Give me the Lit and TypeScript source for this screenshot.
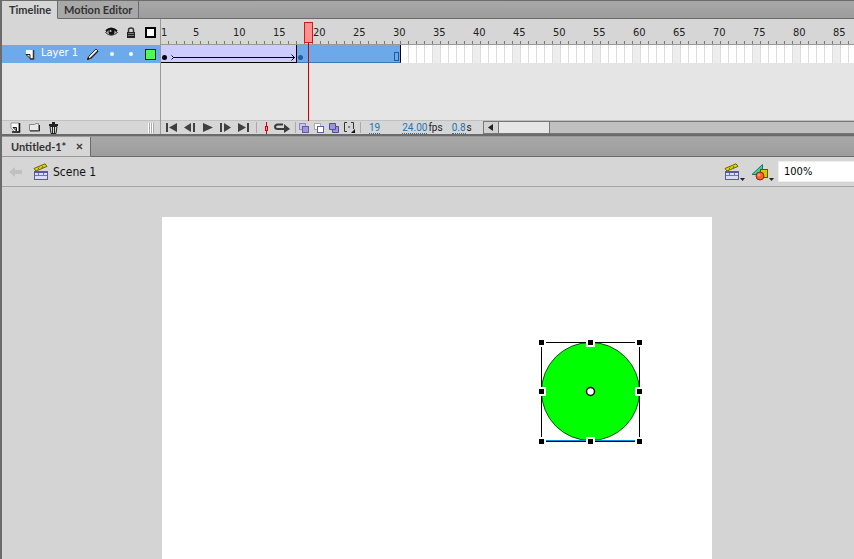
import { LitElement, html, css, svg } from "lit";
import { customElement, state } from "lit/decorators.js";

const FRAME_LABELS = [1, ...Array.from({ length: 17 }, (_, i) => (i + 1) * 5)];

const clapper = html`<svg width="16" height="18" viewBox="0 0 16 18">
  <path d="M1 5.5 L12 0.8 L14 3.4 L3 8 Z" fill="#e6d800" stroke="#6c6400" />
  <path d="M5 6.5 L6 4.5 M9 5 L10 3" stroke="#6c6400" />
  <rect x="1.5" y="8.5" width="13" height="8" fill="#dcdcf8" stroke="#5858a8" />
  <rect x="1" y="8" width="14" height="2" fill="#5858a8" />
  <path d="M2 12.5 H14 M5.5 10 V12 M10.5 10 V12" stroke="#7070c0" />
</svg>`;

const icons = {
  eye: html`<svg width="13" height="10" viewBox="0 0 13 10">
    <path d="M0.5 5.5 Q6 -1 12.5 5.5 Q6 11 0.5 5.5Z" fill="#bbb" stroke="#333" />
    <path d="M1 4 Q6 -1 12 4" fill="none" stroke="#111" stroke-width="2" />
    <circle cx="6.5" cy="5" r="3" fill="#111" /><circle cx="5.5" cy="4" r="1" fill="#ccc" />
  </svg>`,
  lock: html`<svg width="10" height="11" viewBox="0 0 10 11">
    <path d="M2.5 5 V3 Q2.5 1 5 1 Q7.5 1 7.5 3 V5" fill="none" stroke="#333" stroke-width="1.5" />
    <rect x="1" y="5" width="8" height="6" fill="#222" />
    <path d="M2 6.5 H8 M2 8.5 H8" stroke="#777" />
  </svg>`,
  layer: html`<svg width="10" height="11" viewBox="0 0 10 11">
    <path d="M1 1 H8 V9 H5 L1 5Z" fill="#fff" />
    <path d="M1 5.5 H5 V9.5Z" fill="#ddd" stroke="#222" />
    <path d="M8.5 1 V10 H5" fill="none" stroke="#333" stroke-width="1.5" />
  </svg>`,
  pencil: html`<svg width="13" height="13" viewBox="0 0 13 13">
    <path d="M1.5 11.5 L3 8 L10 1 L12 3 L5 10Z" fill="#eee" stroke="#333" />
    <path d="M4.5 10.5 L12 3" stroke="#222" stroke-width="1.5" /><path d="M1 12 L2 9 L4 11Z" fill="#111" />
  </svg>`,
  newLayer: html`<svg width="11" height="11" viewBox="0 0 11 11">
    <path d="M1 1 H9 V10 H5 L1 6Z" fill="#fff" stroke="#999" />
    <path d="M9.5 1 V10 H2" fill="none" stroke="#111" stroke-width="1.5" />
    <path d="M3 5.5 H6.5 V9Z" fill="#aaa" stroke="#222" />
  </svg>`,
  folder: html`<svg width="11" height="9" viewBox="0 0 11 9">
    <path d="M0.5 7.5 V1.5 H5.5 L7 0.5 H9.5 V7.5Z" fill="#e8e8e8" stroke="#888" />
    <path d="M1 8 H10.5 V2" fill="none" stroke="#222" />
  </svg>`,
  trash: html`<svg width="11" height="12" viewBox="0 0 11 12">
    <path d="M1 3 H10 M4 1 H7" stroke="#222" stroke-width="2" />
    <path d="M2 4.5 H9 L8 11.5 H3Z" fill="#ddd" stroke="#222" />
    <path d="M4.5 5 V11 M6.5 5 V11" stroke="#222" />
  </svg>`,
  marker: html`<svg width="5" height="12" viewBox="0 0 5 12">
    <path d="M2.5 0 V12" stroke="#e00000" /><rect x="1.5" y="4.5" width="2" height="4" fill="#f99" stroke="#e00000" />
  </svg>`,
  loop: html`<svg width="16" height="10" viewBox="0 0 16 10">
    <path d="M9 1.5 H4 Q1 1.5 1 4 Q1 6 4 6 H11" fill="none" stroke="#3c3c3c" stroke-width="2" />
    <path d="M10 1 L16 6 L10 10Z" fill="#3c3c3c" />
  </svg>`,
  onion: html`<svg width="10" height="10" viewBox="0 0 10 10">
    <rect x="0.5" y="0.5" width="6" height="6" fill="#c8c2ec" stroke="#8c86bc" />
    <rect x="3.5" y="3.5" width="6" height="6" fill="#9c94dc" stroke="#645ca0" />
  </svg>`,
  outlines: html`<svg width="10" height="10" viewBox="0 0 10 10">
    <rect x="0.5" y="0.5" width="6" height="6" fill="#fff" stroke="#aaa" />
    <rect x="3.5" y="3.5" width="6" height="6" fill="#fff" stroke="#645ca0" />
  </svg>`,
  multi: html`<svg width="10" height="10" viewBox="0 0 10 10">
    <path d="M0.5 0.5 H6.5 V3.5 H9.5 V9.5 H3.5 V6.5 H0.5Z" fill="#9c94dc" stroke="#544c90" />
    <path d="M3.5 6.5 H6.5 V3.5" fill="none" stroke="#544c90" />
  </svg>`,
  range: html`<svg width="11" height="11" viewBox="0 0 11 11">
    <path d="M3 0.5 H0.5 V9.5 H3 M7 0.5 H9.5 V7 M4 5 H6" fill="none" stroke="#333" />
    <path d="M11 7 V11 H7Z" fill="#111" />
  </svg>`,
  back: html`<svg width="13" height="10" viewBox="0 0 13 10"><path d="M0 5 L6 0 V3 H13 V7 H6 V10Z" fill="#c0c0c0" /></svg>`,
  symbols: html`<svg width="18" height="17" viewBox="0 0 18 17">
    <path d="M1 10.5 L11.5 0.5 V10.5Z" fill="#3fd0a0" stroke="#187860" />
    <rect x="9.5" y="5.5" width="7" height="8" fill="#d8c800" stroke="#605800" />
    <circle cx="9" cy="12" r="4" fill="#f46030" stroke="#902808" />
    <circle cx="8" cy="11" r="1.5" fill="#ff9c70" />
  </svg>`,
};

const transport: Array<[string, unknown]> = [
  ["First frame", svg`<path d="M0 0H2V9H0Z M11 0V9L3 4.5Z" />`],
  ["Step back", svg`<path d="M7 0V9L0 4.5Z M9 0H11V9H9Z" />`],
  ["Play", svg`<path d="M1 0L11 4.5L1 9Z" />`],
  ["Step forward", svg`<path d="M0 0H2V9H0Z M4 0V9L11 4.5Z" />`],
  ["Last frame", svg`<path d="M0 0V9L8 4.5Z M9 0H11V9H9Z" />`],
];

@customElement("timeline-ruler")
export class TimelineRuler extends LitElement {
  static styles = css`
    :host {
      display: grid;
      grid-template-columns: repeat(200, 8px);
      height: 26px;
      box-sizing: border-box;
      border-bottom: 1px solid #999;
      overflow: hidden;
      font: 11px/27px "DejaVu Sans Condensed", "Noto Sans", sans-serif;
      color: #222;
      background: repeating-linear-gradient(90deg, transparent 0 7px, #777 7px 8px) 0 100% / 100% 3px no-repeat;
    }
    .number { grid-row: 1; width: 0; white-space: nowrap; }
  `;
  render() {
    return FRAME_LABELS.map((n) => html`<span class="number" style="grid-column:${n}">${n}</span>`);
  }
}

@customElement("frame-track")
export class FrameTrack extends LitElement {
  static styles = css`
    :host {
      display: flex;
      height: 18px;
      background:
        repeating-linear-gradient(90deg, transparent 0 7px, #ddd 7px 8px),
        repeating-linear-gradient(90deg, #fff 0 32px, #ededed 32px 40px);
    }
    .span {
      display: flex;
      align-items: flex-end;
      box-sizing: border-box;
      border-right: 1px solid #000;
      border-bottom: 1px solid #000;
    }
    .tween { width: 136px; background: #ccccff; }
    .selected { width: 104px; background: #6ba9ea; border-bottom-color: #3c78b8; justify-content: space-between; }
    .key { width: 5px; height: 5px; border-radius: 50%; background: #000; margin: 0 0 2px 1px; }
    .selected .key { background: #1c5ca4; }
    .arrow { flex: 1; height: 1px; background: #000; margin: 0 0 4px -1px; }
    .tail { width: 3px; height: 5px; margin: 0 0 2px 4px; }
    .head { width: 4px; height: 7px; margin: 0 1px 1px -4px; }
    .end { width: 5px; height: 9px; box-sizing: border-box; border: 1px solid #1c5ca4; margin: 0 1px 1px; }
  `;
  render() {
    return html`
      <div class="span tween">
        <i class="key"></i>
        <svg class="tail" viewBox="0 0 3 5"><path d="M0.5 0.5 L2.5 2.5 L0.5 4.5" fill="none" stroke="#000" /></svg>
        <i class="arrow"></i>
        <svg class="head" viewBox="0 0 4 7"><path d="M0.5 0.5 L3.5 3.5 L0.5 6.5" fill="none" stroke="#000" /></svg>
      </div>
      <div class="span selected"><i class="key"></i><i class="end"></i></div>
    `;
  }
}

@customElement("app-root")
export class AppRoot extends LitElement {
  @state() private frame = 19;

  static styles = css`
    :host {
      display: flex;
      flex-direction: column;
      min-height: 100vh;
      box-sizing: border-box;
      overflow: hidden;
      border-left: 2px solid #6b6b6b;
      background: #d4d4d4;
      color: #222;
      font: 11px/14px "DejaVu Sans Condensed", "Noto Sans", sans-serif;
    }
    svg { display: block; flex: none; }
    button {
      display: flex;
      align-items: center;
      justify-content: center;
      margin: 0;
      padding: 0;
      border: 0;
      background: none;
      font: inherit;
      color: inherit;
    }
    .tabs {
      display: flex;
      box-sizing: border-box;
      background: linear-gradient(#a8a8a8, #9c9c9c);
      border-top: 1px solid #6b6b6b;
    }
    .tab {
      box-sizing: border-box;
      border-right: 1px solid #6b6b6b;
      border-bottom: 1px solid #6b6b6b;
      font: 700 11px/17px Lato, "Noto Sans", sans-serif;
      color: #333;
      background: #a8a8a8;
      height: 18px;
      padding: 0 6px;
      white-space: nowrap;
    }
    .tab.active { padding-left: 7px; background: #d6d6d6; border-bottom-color: #d6d6d6; }
    .filler { flex: 1; border-bottom: 1px solid #6b6b6b; }
    .timeline { display: grid; grid-template-columns: 158px 1px minmax(0, 1fr); background: #d6d6d6; }
    .layers { display: flex; flex-direction: column; }
    .columns { display: flex; align-items: center; height: 26px; box-sizing: border-box; }
    .layer {
      display: flex;
      align-items: center;
      height: 18px;
      box-sizing: border-box;
      background: #6caaec;
      color: #fff;
    }
    .toggles { display: grid; grid-template-columns: 19px 19px 20px; justify-items: center; align-items: center; margin-left: auto; }
    .box { width: 11px; height: 11px; box-sizing: border-box; border: 2px solid #000; background: #fff; }
    .box.green { border: 1px solid #222; background: #4cff4c; }
    .dot { width: 4px; height: 4px; border-radius: 50%; background: #fff; }
    .layer-icon { margin-left: 23px; }
    .layer-name { padding: 0 8px 2px 6px; white-space: nowrap; }
    .blank { height: 58px; background: #e5e5e5; border-bottom: 1px solid #c0c0c0; box-sizing: border-box; }
    .divider { background: #999; }
    .frames { position: relative; }
    .playhead { position: absolute; left: 143px; top: 3px; bottom: 13px; width: 9px; pointer-events: none; }
    .playhead::before {
      content: "";
      display: block;
      height: 21px;
      box-sizing: border-box;
      border: 1px solid #cc1c1c;
      background: #ff9090;
    }
    .playhead::after { content: ""; position: absolute; top: 21px; bottom: 0; left: 4px; width: 1px; background: #cc0000; }
    .bar { display: flex; align-items: center; height: 13px; }
    .layer-tools { padding-left: 8px; gap: 8px; }
    .grip { width: 6px; height: 10px; margin: 0 6px 0 auto; background: repeating-linear-gradient(90deg, #fff 0 1px, #aaa 1px 2px); }
    .transport { display: flex; gap: 7px; margin-left: 5px; fill: #404040; }
    .rule { width: 1px; height: 11px; background: #aaa; }
    .rule.first { margin: 0 7px; }
    .rule.second { margin: 0 3px 0 5px; }
    .rule.third { margin: 0 8px 0 5px; }
    .loop { margin-left: 5px; }
    .onion { display: flex; gap: 5px; }
    .value, .unit { font: 10px/11px Roboto, "Noto Sans", sans-serif; }
    .value { color: #2474b4; border-bottom: 1px dotted #2474b4; }
    .unit { margin-left: 1px; }
    .fps { margin-left: 22px; }
    .seconds { margin-left: 9px; }
    .scroll { display: flex; flex: 1; height: 13px; box-sizing: border-box; margin-left: 11px; border: 1px solid #777; border-right: 0; background: #c0c0c0; }
    .scroll-button { width: 15px; background: #d2d2d2; border-right: 1px solid #777; }
    .thumb { width: 50px; background: #e6e6e6; border-right: 1px solid #777; }
    .gap { height: 2px; background: #6b6b6b; border-bottom: 1px solid #999; }
    .document-tabs { border-top: 0; }
    .document-tabs .tab { display: flex; align-items: center; gap: 10px; height: 20px; padding: 0 7px 0 9px; }
    .document-tabs .tab.active { border-bottom-color: #999; }
    .close { width: 7px; height: 7px; }
    .edit { display: flex; align-items: center; height: 30px; box-sizing: border-box; border-bottom: 1px solid #a6a6a6; background: #d6d6d6; }
    .back { margin: 0 11px 0 7px; }
    .scene { display: flex; align-items: center; gap: 4px; font-size: 12px; color: #111; }
    .edit-tools { display: flex; gap: 6px; margin-left: auto; }
    .menu { align-items: flex-end; }
    .zoom { width: 76px; height: 21px; box-sizing: border-box; margin-left: 4px; padding: 0 5px; border: 1px solid #eee; border-right: 0; font: inherit; background: #fff; color: #000; outline: 0; }
    .pasteboard { flex: 1; display: flex; padding: 30px 0 0 160px; }
    .stage { position: relative; width: 550px; min-height: 340px; background: #fff; }
    .shape { position: absolute; left: 376px; top: 122px; }
  `;

  private handle(x: number, y: number) {
    return svg`<rect x=${x - 4} y=${y - 4} width="9" height="9" fill="#fff" /><rect x=${x - 2} y=${y - 2} width="5" height="5" fill="#000" />`;
  }

  render() {
    const points = [[3, 3], [52, 3], [101, 3], [3, 52], [101, 52], [3, 102], [52, 102], [101, 102]];
    const arrow = html`<svg width="5" height="3" viewBox="0 0 5 3"><path d="M0 0H5L2.5 3Z" fill="#222" /></svg>`;
    return html`
      <nav class="tabs">
        <button class="tab active">Timeline</button>
        <button class="tab">Motion Editor</button>
        <div class="filler"></div>
      </nav>
      <section class="timeline">
        <div class="layers">
          <div class="columns">
            <div class="toggles">${icons.eye}${icons.lock}<i class="box"></i></div>
          </div>
          <div class="layer">
            <span class="layer-icon">${icons.layer}</span>
            <span class="layer-name">Layer 1</span>
            ${icons.pencil}
            <div class="toggles"><i class="dot"></i><i class="dot"></i><i class="box green"></i></div>
          </div>
          <div class="blank"></div>
          <div class="bar layer-tools">
            <button aria-label="New layer">${icons.newLayer}</button>
            <button aria-label="New folder">${icons.folder}</button>
            <button aria-label="Delete">${icons.trash}</button>
            <i class="grip"></i>
          </div>
        </div>
        <div class="divider"></div>
        <div class="frames">
          <timeline-ruler></timeline-ruler>
          <frame-track></frame-track>
          <div class="blank"></div>
          <div class="bar">
            <div class="transport">
              ${transport.map(([name, shape]) => html`<button aria-label=${name}><svg width="11" height="9" viewBox="0 0 11 9">${shape}</svg></button>`)}
            </div>
            <i class="rule first"></i>
            <button aria-label="Center frame">${icons.marker}</button>
            <button class="loop" aria-label="Loop">${icons.loop}</button>
            <i class="rule second"></i>
            <div class="onion">
              <button aria-label="Onion skin">${icons.onion}</button>
              <button aria-label="Onion skin outlines">${icons.outlines}</button>
              <button aria-label="Edit multiple frames">${icons.multi}</button>
              <button aria-label="Modify markers">${icons.range}</button>
            </div>
            <i class="rule third"></i>
            <span class="value">${this.frame}</span>
            <span class="value fps">24.00</span><span class="unit">fps</span>
            <span class="value seconds">0.8</span><span class="unit">s</span>
            <div class="scroll">
              <button class="scroll-button" aria-label="Scroll left">
                <svg width="5" height="7" viewBox="0 0 5 7"><path d="M5 0V7L0 3.5Z" fill="#222" /></svg>
              </button>
              <div class="thumb"></div>
            </div>
          </div>
          <div class="playhead"></div>
        </div>
      </section>
      <div class="gap"></div>
      <nav class="tabs document-tabs">
        <button class="tab active">
          Untitled-1*
          <svg class="close" viewBox="0 0 7 7"><path d="M1 1L6 6M6 1L1 6" stroke="#444" stroke-width="1.5" /></svg>
        </button>
        <div class="filler"></div>
      </nav>
      <header class="edit">
        <button class="back" aria-label="Back">${icons.back}</button>
        <button class="scene">${clapper}<span>Scene 1</span></button>
        <div class="edit-tools">
          <button class="menu" aria-label="Edit scene">${clapper}${arrow}</button>
          <button class="menu" aria-label="Edit symbols">${icons.symbols}${arrow}</button>
        </div>
        <input class="zoom" aria-label="Zoom" value="100%" />
      </header>
      <main class="pasteboard">
        <div class="stage">
          <svg class="shape" width="106" height="107" viewBox="0 0 106 107">
            <circle cx="52.5" cy="52.5" r="49" fill="#00ff00" stroke="#14501a" />
            <path d="M4 101.5 H101" stroke="#0090e0" />
            <rect x="3.5" y="3.5" width="98" height="99" fill="none" stroke="#000" />
            ${points.map(([x, y]) => this.handle(x, y))}
            <circle cx="52.5" cy="52.5" r="4" fill="#fff" stroke="#000" stroke-width="1.5" />
          </svg>
        </div>
      </main>
    `;
  }
}
